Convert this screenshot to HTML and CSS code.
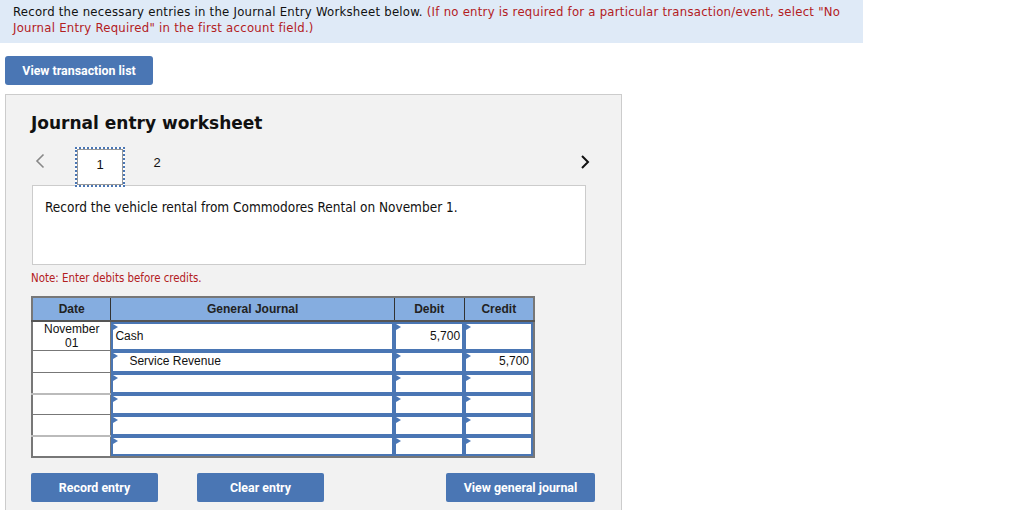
FILE: index.html
```html
<!DOCTYPE html>
<html>
<head>
<meta charset="utf-8">
<link rel="stylesheet" href="styles.css">
</head>
<body>
<div class="banner"><div class="line">Record the necessary entries in the Journal Entry Worksheet below. <span class="red">(If no entry is required for a particular transaction/event, select "No</span></div><div class="line red">Journal Entry Required" in the first account field.)</div></div>
<button class="btn btn-list">View transaction list</button>
<div class="panel">
  <h2 class="title">Journal entry worksheet</h2>
  <div class="tabs">
    <span class="arrow prev"><svg width="10" height="16" viewBox="0 0 10 16"><path d="M8.5 1.5 L2 8 L8.5 14.5" fill="none" stroke="#888" stroke-width="1.6"/></svg></span>
    <span class="tab active">1</span>
    <span class="tab">2</span>
    <span class="spacer"></span>
    <span class="arrow next"><svg width="10" height="16" viewBox="0 0 10 16"><path d="M2 2 L8 8 L2 14" fill="none" stroke="#111" stroke-width="2"/></svg></span>
  </div>
  <div class="desc">Record the vehicle rental from Commodores Rental on November 1.</div>
  <div class="note">Note: Enter debits before credits.</div>
  <table class="journal">
    <thead>
      <tr><th class="c-date">Date</th><th class="c-acct">General Journal</th><th class="c-num">Debit</th><th class="c-num">Credit</th></tr>
    </thead>
    <tbody>
      <tr class="r1"><td class="date">November<br>01</td><td><div class="in acct">Cash</div></td><td><div class="in num">5,700</div></td><td><div class="in num"></div></td></tr>
      <tr class="r2"><td class="date"></td><td><div class="in acct indent">Service Revenue</div></td><td><div class="in num"></div></td><td><div class="in num">5,700</div></td></tr>
      <tr class="r3"><td class="date"></td><td><div class="in acct"></div></td><td><div class="in num"></div></td><td><div class="in num"></div></td></tr>
      <tr class="r4"><td class="date"></td><td><div class="in acct"></div></td><td><div class="in num"></div></td><td><div class="in num"></div></td></tr>
      <tr class="r3"><td class="date"></td><td><div class="in acct"></div></td><td><div class="in num"></div></td><td><div class="in num"></div></td></tr>
      <tr class="r4"><td class="date"></td><td><div class="in acct"></div></td><td><div class="in num"></div></td><td><div class="in num"></div></td></tr>
    </tbody>
  </table>
  <div class="actions">
    <button class="btn btn-act">Record entry</button>
    <button class="btn btn-act">Clear entry</button>
    <span class="spacer"></span>
    <button class="btn btn-view">View general journal</button>
  </div>
</div>
</body>
</html>
```

FILE: styles.css
```css
* { box-sizing: border-box; }
body {
  margin: 0;
  background: #fff;
  font-family: "DejaVu Sans Condensed", "DejaVu Sans", sans-serif;
  color: #111;
  height: 510px;
  overflow: hidden;
}
.banner {
  width: 863px;
  height: 43px;
  background: #dfeaf7;
  padding: 4px 13px 0 13px;
  font-size: 13px;
  letter-spacing: 0.25px;
  line-height: 16px;
  color: #111;
}
.line { white-space: nowrap; }
.red { color: #b3201e; }
.btn {
  display: block;
  border: none;
  background: #4a76b4;
  color: #fff;
  font-family: Roboto, "Liberation Sans", sans-serif;
  font-weight: 700;
  font-size: 12.4px;
  border-radius: 2px;
  padding: 0;
  cursor: pointer;
}
.btn-list {
  margin: 13px 0 0 5px;
  width: 148px;
  height: 29px;
  border-radius: 3px;
}
.panel {
  margin: 9px 0 0 5px;
  width: 617px;
  height: 440px;
  background: #f2f2f2;
  border: 1px solid #cccccc;
  padding: 0 0 0 25px;
}
.title {
  margin: 18px 0 0 0;
  font-family: "DejaVu Sans", sans-serif;
  font-weight: 700;
  font-size: 17px;
  line-height: 20px;
  color: #111;
}
.tabs {
  display: flex;
  align-items: center;
  margin-top: 14px;
  height: 40px;
  width: 562px;
  position: relative;
  z-index: 1;
}
.arrow { display: flex; align-items: center; }
.prev { margin-left: 4px; margin-right: 30px; margin-top: -12px; }
.next { margin-right: 3px; margin-top: -10px; }
.spacer { flex: 1; }
.tab {
  width: 50px;
  height: 40px;
  display: flex;
  align-items: flex-start;
  justify-content: center;
  padding-top: 8px;
  font-family: "Liberation Sans", sans-serif;
  font-size: 13px;
  color: #111;
}
.tab.active {
  background: #fff;
  border: 2px dotted #4a76b4;
  box-shadow: inset 0 0 0 1px #999;
}
.tab + .tab { margin-left: 4px; width: 56px; }
.desc {
  margin: -2px 0 0 1px;
  width: 554px;
  height: 80px;
  background: #fff;
  border: 1px solid #cccccc;
  padding: 13px 0 0 12px;
  font-size: 13.5px;
  line-height: 16px;
  color: #111;
}
.note {
  margin-top: 6px;
  font-size: 11.4px;
  color: #b3201e;
  line-height: 14px;
}
.journal {
  margin-top: 11px;
  border-collapse: collapse;
  width: 504px;
  font-family: "Liberation Sans", sans-serif;
  font-size: 12px;
  background: #fff;
  border: 2px solid #777;
}
.journal th {
  background: #85ade0;
  height: 24px;
  font-weight: 700;
  font-size: 12px;
  color: #222;
  border-left: 1px solid #333;
  border-bottom: 2px solid #555;
  padding: 0;
}
.journal th:first-child { border-left: none; }
.c-date { width: 79px; }
.c-acct { width: 284px; }
.c-num { width: 70px; }
.journal td {
  padding: 0;
  height: 21px;
  vertical-align: top;
}
.journal td.date {
  border: 1px solid #777;
  text-align: center;
  line-height: 14px;
  color: #111;
}
.journal tr.r1 td { height: 28px; }
.journal tr.r2 td { height: 22px; }
.journal tr.r4 td { height: 21px; }
.journal tr.r4 td.date { border-top: 2px solid #bbb; }
.in {
  position: relative;
  height: 100%;
  border: 2px solid #4a76b4;
  background: #fff;
  padding: 0 2px;
  line-height: 17px;
  color: #111;
}
.in::before {
  content: "";
  position: absolute;
  left: 0;
  top: 0;
  border-left: 5px solid #4a76b4;
  border-top: 3px solid transparent;
  border-bottom: 3px solid transparent;
}
.r1 .in { padding-top: 4px; }
.acct.indent { padding-left: 16px; }
.num { text-align: right; }
.actions {
  display: flex;
  margin-top: 15px;
  width: 564px;
}
.btn-act {
  width: 127px;
  height: 29px;
  margin-right: 39px;
}
.btn-view {
  width: 149px;
  height: 29px;
}
```
